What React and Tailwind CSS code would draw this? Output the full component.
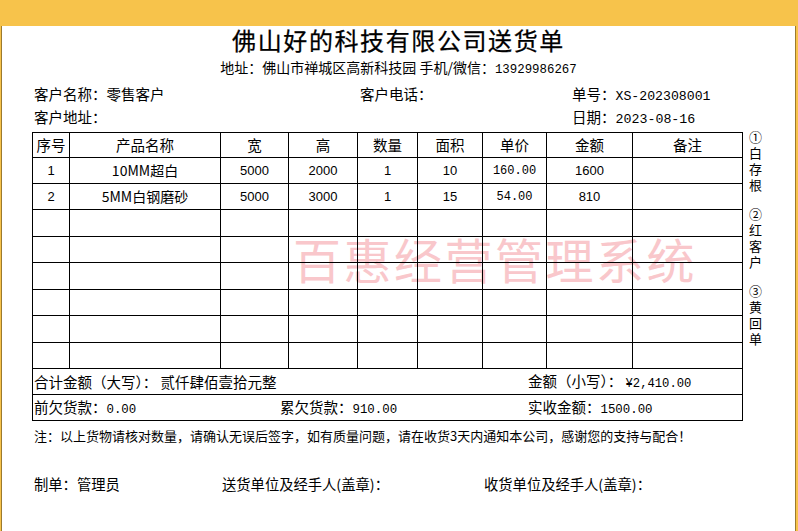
import React from "react";

const cn = "font-['Noto_Sans_CJK_SC',sans-serif]";
const mono = "font-['Liberation_Mono','Noto_Sans_CJK_SC',monospace]";
const num = "font-['Liberation_Sans','Noto_Sans_CJK_SC',sans-serif]";

const cols = "grid grid-cols-[37px_151px_68px_69px_60px_65px_64px_86px_110px]";

const heads = ["序号", "产品名称", "宽", "高", "数量", "面积", "单价", "金额", "备注"];

const items = [
  ["1", "10MM超白", "5000", "2000", "1", "10", "160.00", "1600", ""],
  ["2", "5MM白钢磨砂", "5000", "3000", "1", "15", "54.00", "810", ""],
  ["", "", "", "", "", "", "", "", ""],
  ["", "", "", "", "", "", "", "", ""],
  ["", "", "", "", "", "", "", "", ""],
  ["", "", "", "", "", "", "", "", ""],
  ["", "", "", "", "", "", "", "", ""],
  ["", "", "", "", "", "", "", "", ""],
];

const rowH = ["h-[26px]", "h-[26px]", "h-[27px]", "h-[26px]", "h-[27px]", "h-[26px]", "h-[27px]", "h-[26px]"];

const Cell = ({ children, className = "" }) => (
  <div className={`border-r border-b border-black flex items-center justify-center ${className}`}>
    {children}
  </div>
);

// copies legend down the right side
const Copies = () => (
  <div className={`${cn} ml-[4px] -mt-[1px] flex flex-col gap-[13px] text-[13px] leading-[16px]`}>
    {["①白存根", "②红客户", "③黄回单"].map((g) => (
      <div key={g} className="[writing-mode:vertical-rl] [text-orientation:upright] tracking-[3px] h-[64px]">
        {g}
      </div>
    ))}
  </div>
);

export default function App() {
  return (
    <div className="w-[798px] h-[531px] bg-[#f7c34b] pt-[2px] pb-[2px] pl-[1px] pr-[2px]">
      <div className={`${cn} relative h-full bg-white border-l border-r border-[#9b7a2e] text-black`}>
        {/* watermark */}
        <div className="absolute left-[291px] top-[202px] text-[48px] leading-[60px] tracking-[2.5px] text-[#f9c7cb] select-none">
          百惠经营管理系统
        </div>

        <div className="mt-[24px] h-[28px] leading-[28px] text-center text-[24px] font-normal tracking-[1.6px] [-webkit-text-stroke:0.25px_black]">
          佛山好的科技有限公司送货单
        </div>
        <div className="mt-[3px] h-[20px] leading-[20px] text-center text-[14px]">
          地址：佛山市禅城区高新科技园 手机/微信：<span className={`${mono} text-[12.4px]`}>13929986267</span>
        </div>

        <div className="pl-[32px] text-[14.5px]">
          <div className="mt-[5px] h-[23px] leading-[23px] grid grid-cols-[326px_212px_1fr]">
            <span>客户名称：零售客户</span>
            <span>客户电话：</span>
            <span>
              单号：<span className={`${mono} text-[13.2px]`}>XS-202308001</span>
            </span>
          </div>
          <div className="h-[23px] leading-[23px] grid grid-cols-[538px_1fr]">
            <span>客户地址：</span>
            <span>
              日期：<span className={`${mono} text-[13.3px]`}>2023-08-16</span>
            </span>
          </div>
        </div>

        <div className="mt-[4px] pl-[30px] flex items-start">
          <div className="relative w-[711px] border-l border-t border-black">
            <div className={`${cols} h-[25px] text-[14.5px]`}>
              {heads.map((h) => (
                <Cell key={h}>{h}</Cell>
              ))}
            </div>
            {items.map((r, i) => (
              <div key={i} className={`${cols} ${rowH[i]} text-[13px]`}>
                {r.map((v, j) => (
                  <Cell key={j} className={j === 1 ? "text-[14px]" : j === 6 ? `${mono} text-[12px]` : num}>
                    {v}
                  </Cell>
                ))}
              </div>
            ))}
            <div className="h-[26px] border-r border-b border-black grid grid-cols-[494px_1fr] items-center pl-[1px] text-[14.5px]">
              <span>合计金额（大写）： 贰仟肆佰壹拾元整</span>
              <span>
                金额（小写）： <span className={`${mono} text-[12.2px]`}>¥2,410.00</span>
              </span>
            </div>
            <div className="h-[26px] border-r border-b border-black grid grid-cols-[246px_248px_1fr] items-center pl-[1px] text-[14.5px]">
              <span>
                前欠货款：<span className={`${mono} text-[12.4px]`}>0.00</span>
              </span>
              <span>
                累欠货款：<span className={`${mono} text-[12.4px]`}>910.00</span>
              </span>
              <span>
                实收金额：<span className={`${mono} text-[12.4px]`}>1500.00</span>
              </span>
            </div>
          </div>
          <Copies />
        </div>

        <div className="mt-[5px] pl-[32px] h-[20px] leading-[20px] text-[13px]">
          注：以上货物请核对数量，请确认无误后签字，如有质量问题，请在收货3天内通知本公司，感谢您的支持与配合！
        </div>

        <div className="mt-[27px] pl-[32px] h-[22px] leading-[22px] text-[14.3px] grid grid-cols-[188px_262px_1fr]">
          <span>制单：管理员</span>
          <span>送货单位及经手人(盖章)：</span>
          <span>收货单位及经手人(盖章)：</span>
        </div>
      </div>
    </div>
  );
}
